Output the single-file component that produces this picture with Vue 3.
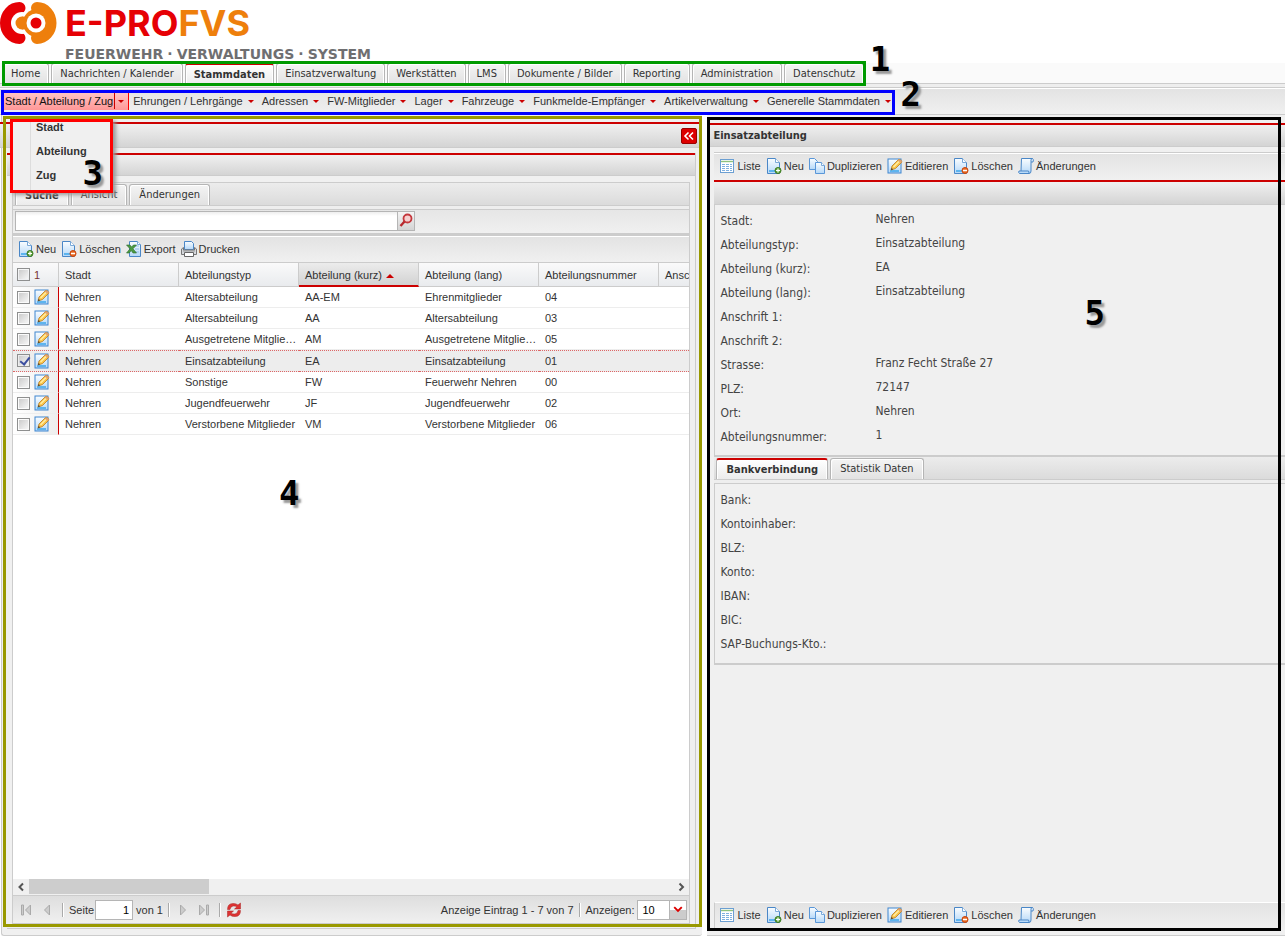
<script setup>
import { ref } from 'vue'

const tabs = ['Home', 'Nachrichten / Kalender', 'Stammdaten', 'Einsatzverwaltung', 'Werkstätten', 'LMS', 'Dokumente / Bilder', 'Reporting', 'Administration', 'Datenschutz']
const activeTab = ref('Stammdaten')
const menus = ['Stadt / Abteilung / Zug', 'Ehrungen / Lehrgänge', 'Adressen', 'FW-Mitglieder', 'Lager', 'Fahrzeuge', 'Funkmelde-Empfänger', 'Artikelverwaltung', 'Generelle Stammdaten']
const subMenu = ['Stadt', 'Abteilung', 'Zug']
const listTools = [['Neu', 'add'], ['Löschen', 'del'], ['Export', 'xls'], ['Drucken', 'print']]
const detailTools = [['Liste', 'list'], ['Neu', 'add'], ['Duplizieren', 'copy'], ['Editieren', 'edit'], ['Löschen', 'del'], ['Änderungen', 'log']]
const query = ref('')
const page = ref('1')
const rows = ref([
  { typ: 'Altersabteilung', kurz: 'AA-EM', lang: 'Ehrenmitglieder', nr: '04', on: false },
  { typ: 'Altersabteilung', kurz: 'AA', lang: 'Altersabteilung', nr: '03', on: false },
  { typ: 'Ausgetretene Mitglieder', kurz: 'AM', lang: 'Ausgetretene Mitglieder', nr: '05', on: false },
  { typ: 'Einsatzabteilung', kurz: 'EA', lang: 'Einsatzabteilung', nr: '01', on: true },
  { typ: 'Sonstige', kurz: 'FW', lang: 'Feuerwehr Nehren', nr: '00', on: false },
  { typ: 'Jugendfeuerwehr', kurz: 'JF', lang: 'Jugendfeuerwehr', nr: '02', on: false },
  { typ: 'Verstorbene Mitglieder', kurz: 'VM', lang: 'Verstorbene Mitglieder', nr: '06', on: false }
])
const fields = [['Stadt', 'Nehren'], ['Abteilungstyp', 'Einsatzabteilung'], ['Abteilung (kurz)', 'EA'], ['Abteilung (lang)', 'Einsatzabteilung'], ['Anschrift 1', ''], ['Anschrift 2', ''], ['Strasse', 'Franz Fecht Straße 27'], ['PLZ', '72147'], ['Ort', 'Nehren'], ['Abteilungsnummer', '1']]
const bank = ['Bank', 'Kontoinhaber', 'BLZ', 'Konto', 'IBAN', 'BIC', 'SAP-Buchungs-Kto.']
</script>

<template>
  <div class="app">
    <svg class="defs" aria-hidden="true">
      <defs>
        <linearGradient id="paper" x1="0" y1="0" x2="0" y2="1"><stop offset="0" stop-color="#fafdff" /><stop offset="1" stop-color="#b5d8f8" /></linearGradient>
      </defs>
      <symbol id="i-page" viewBox="0 0 16 16">
        <path d="M1.500 .5h8l4 4v11h-12z" fill="url(#paper)" stroke="#4a87c7" />
        <path d="M9.500 .5v4h4" fill="#fff" stroke="#7aa9d8" />
        <path d="M3 13h9" stroke="#5db4ee" stroke-width="2" />
      </symbol>
      <symbol id="i-add" viewBox="0 0 16 16">
        <use href="#i-page" />
        <circle cx="12" cy="12.500" r="3" fill="#5fa43a" stroke="#3b7a22" />
        <path d="M12 10.500v4M10 12.500h4" stroke="#fff" stroke-width="1.200" />
      </symbol>
      <symbol id="i-del" viewBox="0 0 16 16">
        <use href="#i-page" />
        <circle cx="12" cy="12.500" r="3" fill="#ea6a20" stroke="#c8440c" />
        <path d="M10 12.500h4" stroke="#fff" stroke-width="1.500" />
      </symbol>
      <symbol id="i-xls" viewBox="0 0 16 16">
        <path d="M3.500 .5h8l3 3v12h-11z" fill="url(#paper)" stroke="#4a87c7" />
        <path d="M11.500 .5v3h3" fill="#fff" stroke="#7aa9d8" />
        <path d="M9 5h4M9 8h4M9 11h4" stroke="#8fbde8" />
        <path d="M.5 4h3.500l1.500 2L7.500 4H10.500L7 7.800 10.500 12H7L5.200 9.500 3.200 12H.5L4 7.800z" fill="#4c9a42" stroke="#2b6b2c" stroke-width=".6" />
      </symbol>
      <symbol id="i-print" viewBox="0 0 16 16">
        <path d="M3.500 .5h7l2 2v6h-9z" fill="url(#paper)" stroke="#4a87c7" />
        <path d="M.5 8l2-1.500V9h11V6.500l2 1.500v5.500H.5z" fill="#d5d8dc" stroke="#777" />
        <path d="M3.500 11.500h9v4h-9z" fill="#fff" stroke="#666" />
        <path d="M2 10h12" stroke="#999" />
      </symbol>
      <symbol id="i-edit" viewBox="0 0 16 16">
        <rect x="1" y="1" width="13" height="14" fill="url(#paper)" stroke="#3f86d0" />
        <path d="M3 13h9" stroke="#5db4ee" stroke-width="2" />
        <path d="M4 12l1-4L11.500 1.500q2.500-.5 3.500 2.500L8.500 10.500z" fill="#fbc54a" stroke="#b57a22" stroke-width=".8" />
        <path d="M6.500 9L13 2.500" stroke="#fff0a8" stroke-width="1.200" />
        <path d="M11.500 1.500q3-.5 3.500 2.500l-1 1-3.500-2.500z" fill="#e0a070" />
        <path d="M4 12l.6-2 1.500 1.300z" fill="#333" />
      </symbol>
      <symbol id="i-list" viewBox="0 0 16 16">
        <rect x="1.500" y="1.500" width="13" height="13" fill="#fff" stroke="#6c9fd2" />
        <path d="M2 3.500h12" stroke="#8fc27f" stroke-width="1.400" />
        <path d="M3 6.500h10M3 8.500h10M3 10.500h10M3 12.500h10" stroke="#7fb0e0" />
        <path d="M6.500 5.500v8M10.500 5.500v8" stroke="#fff" />
      </symbol>
      <symbol id="i-copy" viewBox="0 0 16 16">
        <path d="M.5 .5h5l3 3v8h-8z" fill="url(#paper)" stroke="#5a97d8" />
        <path d="M6.500 4.500h6l3 3v8h-9z" fill="url(#paper)" stroke="#5a97d8" />
        <path d="M12.500 4.500v3h3" fill="#fff" stroke="#7aa9d8" />
      </symbol>
      <symbol id="i-log" viewBox="0 0 16 16">
        <path d="M3.500 .5h11q1.500 1 .5 3.500h-2v9q0 2.500-2 2.500H1.500q-1.500-1-.5-2.500h2z" fill="url(#paper)" stroke="#4a87c7" />
        <path d="M3 13h7.500q.5 1 .5 2.500M13 4V2q0-1.500 1.500-1.500" fill="none" stroke="#4a87c7" />
      </symbol>
    </svg>

    <header class="brand">
      <svg class="mark" viewBox="0 0 57 42" aria-hidden="true">
        <path d="M19.500 6A13.500 15 0 0 0 19.500 36" fill="none" stroke="#e60005" stroke-width="12" stroke-linecap="round" />
        <circle cx="22" cy="21" r="11" fill="#fff" />
        <path d="M37 6A13.500 15 0 0 1 37 36" fill="none" stroke="#ee7f0c" stroke-width="12" stroke-linecap="round" />
        <circle cx="37" cy="21" r="14" fill="#ee7f0c" />
        <circle cx="22" cy="21" r="6.500" fill="#ee7f0c" />
        <path d="M22 14.500q4 1 7-2v17q-3-3-7-2z" fill="#ee7f0c" />
        <circle cx="36" cy="21" r="9.500" fill="#fff" />
        <circle cx="36" cy="21" r="5.500" fill="#e60005" />
      </svg>
      <div class="words">
        <div class="name">E-PRO<span>FVS</span></div>
        <div class="claim">FEUERWEHR<span>·</span>VERWALTUNGS<span>·</span>SYSTEM</div>
      </div>
    </header>

    <nav class="tabbar">
      <div class="tabs main-tabs">
        <button v-for="t in tabs" :key="t" class="tab" :class="{ active: t === activeTab }" @click="activeTab = t">{{ t }}</button>
        <span class="frame green"></span>
        <span class="mark-no one">1</span>
      </div>
    </nav>

    <nav class="menubar">
      <div class="menus">
        <button v-for="(m, i) in menus" :key="m" class="menu" :class="{ open: i === 0 }"><span>{{ m }}</span><i></i></button>
        <span class="frame blue"></span>
        <span class="mark-no two">2</span>
        <div class="dropdown">
          <a v-for="s in subMenu" :key="s" href="#">{{ s }}</a>
          <span class="frame red"></span>
          <span class="mark-no three">3</span>
        </div>
      </div>
    </nav>

    <main class="work">
      <section class="left">
        <div class="bar top-bar">
          <button class="collapse" aria-label="Einklappen">
            <svg viewBox="0 0 14 14"><path d="M6.500 3.500L3 7l3.500 3.500M11 3.500L7.500 7l3.500 3.500" fill="none" stroke="#fff" stroke-width="1.600" /></svg>
          </button>
        </div>
        <div class="inner">
          <div class="bar sub-bar"></div>
          <div class="card">
            <div class="tabs strip list-strip">
              <button class="tab active">Suche</button>
              <button class="tab">Ansicht</button>
              <button class="tab">Änderungen</button>
            </div>
            <div class="search">
              <input v-model="query" type="text" aria-label="Suche">
              <button aria-label="Suchen">
                <svg viewBox="0 0 16 16"><circle cx="9.500" cy="5.500" r="4" fill="#f6cfcf" stroke="#c4373c" stroke-width="1.800" /><path d="M6.500 8.500l-4 4.500" stroke="#b8282d" stroke-width="2.400" /></svg>
              </button>
            </div>
            <div class="tools list-tools">
              <button v-for="[n, ic] in listTools" :key="n"><svg><use :href="'#i-' + ic" /></svg>{{ n }}</button>
            </div>
            <div class="grid">
              <table>
                <colgroup><col class="c0"><col><col><col><col><col><col></colgroup>
                <thead>
                  <tr>
                    <th class="pick"><div><input type="checkbox" aria-label="Alle auswählen"><span>1</span></div></th>
                    <th>Stadt</th><th>Abteilungstyp</th><th class="sorted">Abteilung (kurz)<i></i></th><th>Abteilung (lang)</th><th>Abteilungsnummer</th><th>Anschrift 1</th>
                  </tr>
                </thead>
                <tbody>
                  <tr v-for="r in rows" :key="r.nr" :class="{ selected: r.on }">
                    <td class="pick"><div><input v-model="r.on" type="checkbox" :aria-label="r.lang"><svg><use href="#i-edit" /></svg></div></td>
                    <td>Nehren</td><td>{{ r.typ }}</td><td>{{ r.kurz }}</td><td>{{ r.lang }}</td><td>{{ r.nr }}</td><td></td>
                  </tr>
                </tbody>
              </table>
              <span class="mark-no four">4</span>
            </div>
            <div class="hscroll">
              <svg viewBox="0 0 16 16"><path d="M10 4.500L6.500 8l3.500 3.500" /></svg>
              <div class="track"><div class="thumb"></div></div>
              <svg viewBox="0 0 16 16"><path d="M6.500 4.500L10 8l-3.500 3.500" /></svg>
            </div>
            <div class="paging">
              <button class="pg" aria-label="Erste Seite"><svg viewBox="0 0 16 16"><path d="M3.500 3h2v10h-2zM12.500 3v10l-5-5z" /></svg></button>
              <button class="pg" aria-label="Vorige Seite"><svg viewBox="0 0 16 16"><path d="M10.500 3v10l-5-5z" /></svg></button>
              <b class="sep"></b>
              <label for="page">Seite</label>
              <input id="page" v-model="page" type="text">
              <span>von 1</span>
              <b class="sep"></b>
              <button class="pg" aria-label="Nächste Seite"><svg viewBox="0 0 16 16"><path d="M5.500 3v10l5-5z" /></svg></button>
              <button class="pg" aria-label="Letzte Seite"><svg viewBox="0 0 16 16"><path d="M3.500 3v10l5-5zM10.500 3h2v10h-2z" /></svg></button>
              <b class="sep"></b>
              <button class="pg reload" aria-label="Aktualisieren"><svg viewBox="0 0 16 16"><path d="M1.500 7.500Q1.500 1.500 7 1.500q3-.2 5 1.500l2.500-2v6H8.500l2.500-2.200Q9.500 3.800 7 4 4.300 4.500 4 7.500z" /><path d="M14.500 8.500q0 6-5.500 6-3 .2-5-1.500l-2.500 2v-6h6L5 11.200q1.500 1 4 .8 2.700-.5 3-3.500z" /></svg></button>
              <span class="info">Anzeige Eintrag 1 - 7 von 7</span>
              <b class="sep"></b>
              <label for="size">Anzeigen:</label>
              <span class="combo">
                <select id="size"><option>10</option><option>25</option></select>
                <svg viewBox="0 0 17 18"><path d="M4.500 6L8.500 10l4-4" /></svg>
              </span>
            </div>
          </div>
        </div>
        <span class="frame olive"></span>
      </section>

      <section class="right">
        <h2 class="bar">Einsatzabteilung</h2>
        <div class="detail">
          <div class="tools">
            <button v-for="[n, ic] in detailTools" :key="n"><svg><use :href="'#i-' + ic" /></svg>{{ n }}</button>
          </div>
          <div class="bar form-bar"></div>
          <dl class="form">
            <div v-for="[k, v] in fields" :key="k"><dt>{{ k }}:</dt><dd>{{ v }}</dd></div>
          </dl>
          <div class="tabs strip">
            <button class="tab active">Bankverbindung</button>
            <button class="tab">Statistik Daten</button>
          </div>
          <dl class="form bank">
            <div v-for="k in bank" :key="k"><dt>{{ k }}:</dt><dd></dd></div>
          </dl>
          <div class="tools bottom">
            <button v-for="[n, ic] in detailTools" :key="n"><svg><use :href="'#i-' + ic" /></svg>{{ n }}</button>
          </div>
        </div>
        <span class="frame black"></span>
        <span class="mark-no five">5</span>
      </section>
    </main>
  </div>
</template>

<style>
html, body { margin: 0; background: #fff; overflow: hidden; }
</style>

<style scoped>
* { box-sizing: border-box; }
.app { height: 100vh; display: flex; flex-direction: column; font: 11px/14px "Liberation Sans", Arial, sans-serif; color: #333; }
.defs { position: absolute; width: 0; height: 0; }
button { border: 0; background: none; padding: 0; margin: 0; font: inherit; color: inherit; white-space: nowrap; }
a { color: inherit; text-decoration: none; }
svg { display: block; flex: none; }

.brand { display: flex; gap: 8px; height: 63px; padding-top: 2px; flex: none; }
.mark { width: 57px; height: 42px; }
.name { font: 700 36px/42px Inter, sans-serif; color: #e60005; }
.name span { color: #ee7f0c; }
.claim { margin-top: 2px; font: 700 14px/17px "DejaVu Sans", sans-serif; color: #6f6f71; }
.claim span { padding: 0 4px; }

.tabs { display: flex; font-family: "DejaVu Sans Condensed", "DejaVu Sans", sans-serif; }
.tab { height: 21px; padding: 0 9px; border: 1px solid #b5b5b5; border-bottom: 0; border-radius: 3px 3px 0 0; background: linear-gradient(#f4f4f4, #e2e2e2); box-shadow: inset 1px 1px #fff, inset -1px 0 #fff; }
.tab.active { background: linear-gradient(#fff, #ececec); font-weight: 700; border-top: 2px solid #c00; }
.tabbar { height: 25px; background: #fafafa; border-bottom: 1px solid #ccc; box-shadow: inset 0 -3px #eee, inset 0 -4px #ccc; flex: none; }
.main-tabs { position: relative; gap: 2px; width: max-content; padding: 0 2px; }
.main-tabs .tab { padding: 0 8px; }
.menubar { height: 27px; flex: none; background: linear-gradient(#e3e3e3, #f0f0f0); border-top: 1px solid #fff; border-bottom: 1px solid #ccc; }
.menus { position: relative; display: flex; width: max-content; padding: 3px 0 0 1px; }
.menu { display: flex; align-items: center; height: 18px; }
.menu span { padding: 0 5px 0 4px; }
.menu i { border: 3px solid transparent; border-top: 3px solid #c00; border-bottom: 0; margin-right: 4px; }
.menu.open { background: linear-gradient(#ffc6c6, #ff9797); border-right: 1px solid #f00; color: #111; }
.menu.open span { padding-right: 1px; height: 16px; line-height: 16px; border-right: 1px solid #c00; margin-right: 3px; }
.dropdown { position: absolute; z-index: 4; left: 10px; top: 30px; width: 103px; height: 74px; padding-left: 26px; background: linear-gradient(90deg, #f0f0f0 20px, #ddd 20px, #ddd 21px, #f0f0f0 21px); box-shadow: 3px 2px 4px #999; font-weight: 700; }
.dropdown a { display: block; height: 24px; line-height: 16px; }

.frame { position: absolute; pointer-events: none; z-index: 5; border: 3px solid; }
.green { inset: -2px 0 -2px 2px; border-color: #009a00; }
.blue { inset: 1px 0 -5px 1px; border-color: #00f; }
.red { inset: 0; border-color: #f00; }
.olive { inset: 1px 0 8px 1px; border-color: #990; }
.black { inset: 2px 4px 4px 0; border-color: #000; }
.mark-no { position: absolute; z-index: 6; font: 700 34px/34px "DejaVu Sans Mono", monospace; color: #000; text-shadow: 3px 3px 2px #999; }
.one { right: -24px; top: -21px; }
.two { right: -26px; top: -12px; }
.three { right: 10px; bottom: 3px; }
.four { left: 266px; top: 213px; }
.five { right: 180px; top: 181px; }

.work { flex: 1; min-height: 0; display: flex; gap: 5px; padding-bottom: 1px; }
.bar { border-top: 2px solid #c00; border-bottom: 1px solid #ccc; background: linear-gradient(#f0f0f0, #d4d4d4); margin: 0; }
.left { position: relative; flex: 701 1 0; min-width: 0; display: flex; flex-direction: column; margin-left: 1px; padding-top: 7px; background: #f0f0f0; border-left: 1px solid #ccc; border-bottom: 1px solid #ccc; border-radius: 0 0 3px 3px; }
.left .bar { flex: none; }
.top-bar { height: 26px; display: flex; justify-content: flex-end; align-items: center; padding-right: 5px; margin-left: -2px; }
.collapse { width: 16px; height: 16px; border: 1px solid #900; border-radius: 2px; background: #d00; }
.inner { flex: 1; min-height: 0; display: flex; flex-direction: column; margin: 5px 6px 6px 5px; border-bottom: 1px solid #ccc; border-right: 1px solid #ccc; }
.sub-bar { height: 23px; }
.card { flex: 1; min-height: 0; display: flex; flex-direction: column; margin: 6px 5px 4px 5px; border: 1px solid #ccc; }
.strip { gap: 2px; height: 27px; flex: none; padding: 1px 2px 0; background: linear-gradient(#ececec, #d8d8d8); border-bottom: 1px solid #ccc; box-shadow: inset 0 -3px #eee, inset 0 -4px #ccc; }
.search { display: flex; flex: none; height: 26px; padding: 1px 2px; border-bottom: 3px solid #ccc; background: linear-gradient(#e6e6e6, #f0f0f0); }
.search input { width: 383px; height: 20px; border: 1px solid #b5b5b5; background: linear-gradient(#eee, #fff 4px); padding: 0 4px; font: inherit; }
.search button { width: 17px; height: 20px; border: 1px solid #b5b5b5; border-left: 0; background: linear-gradient(#f4f4f4, #d4d4d4); }
.search svg { width: 16px; height: 16px; }
.tools { display: flex; align-items: center; gap: 5px; height: 27px; flex: none; padding: 0 0 2px 5px; border-top: 1px solid #fff; background: linear-gradient(#e3e3e3, #f0f0f0); }
.tools button { display: flex; align-items: center; gap: 2px; }
.tools svg { width: 16px; height: 16px; }
.list-tools { border-bottom: 1px solid #ccc; }
.grid { position: relative; flex: 1; min-height: 0; overflow: hidden; background: #fff; }
table { table-layout: fixed; border-collapse: separate; border-spacing: 0; width: 766px; }
.c0 { width: 46px; }
th, td { padding: 0 2px 0 6px; text-align: left; font-weight: 400; overflow: hidden; text-overflow: ellipsis; white-space: nowrap; }
th { height: 24px; background: linear-gradient(#fafafa, #e9ebee); border-bottom: 1px solid #ccc; border-right: 1px solid #ccc; }
td { height: 21px; border-bottom: 1px solid #ededed; }
th.sorted { background: linear-gradient(#ececec, #d2d2d2); border-bottom: 2px solid #c00; padding-top: 1px; }
.sorted i { display: inline-block; border: 4px solid transparent; border-top: 0; border-bottom: 4px solid #c00; margin: 0 0 1px 4px; }
th.pick, td.pick { padding: 0 0 0 4px; }
.pick div { display: flex; align-items: center; gap: 4px; height: 19px; }
td.pick { background: linear-gradient(90deg, #fff, #eee); border-right: 1px solid #c00; }
.pick svg { width: 16px; height: 16px; }
.pick input { appearance: none; width: 13px; height: 13px; margin: 0; border: 1px solid #8e8f8f; background: linear-gradient(135deg, #ccc, #f6f6f6) content-box #fff; padding: 1px; }
.pick input:checked::after { content: ""; display: block; width: 4px; height: 8px; margin: -1px 0 0 3px; border: solid #3c4fa0; border-width: 0 2px 2px 0; transform: rotate(38deg); }
.pick span { color: #733; }
.selected td { background: #ededed; border-top: 1px dotted #d66; border-bottom: 1px dotted #d66; padding-bottom: 1px; }
.hscroll { display: flex; height: 16px; flex: none; background: #f0f0f0; }
.hscroll svg { width: 16px; height: 16px; fill: none; stroke: #555; stroke-width: 2; }
.track { flex: 1; }
.thumb { width: 28%; height: 15px; background: #cdcdcd; }
.paging { display: flex; align-items: center; height: 28px; flex: none; padding: 0 2px 0 5px; border-top: 1px solid #ccc; background: linear-gradient(#dedede, #f0f0f0); }
.pg svg { width: 16px; height: 16px; fill: #ccc; stroke: #aaa; }
.pg { margin-right: 5px; }
.reload svg { fill: #d33; stroke: #a22; stroke-width: .5; }
.sep { width: 2px; height: 14px; border-left: 1px solid #aaa; border-right: 1px solid #fff; margin: 0 5px 0 2px; }
.paging input { width: 38px; height: 20px; margin: 0 3px 0 1px; text-align: right; border: 1px solid #b5b5b5; padding: 0 3px; font: inherit; }
.paging input + span { margin-right: 3px; }
.info { margin-left: auto; padding-right: 3px; }
.combo { position: relative; margin-left: 3px; display: flex; border: 1px solid #b5b5b5; height: 20px; background: #fff; }
.combo select { appearance: none; width: 48px; border: 0; padding: 0 4px; font: inherit; background: transparent; }
.combo svg { position: absolute; right: 0; top: 0; width: 17px; height: 18px; background: linear-gradient(#fff 50%, #ccc 50%); border-left: 1px solid #b5b5b5; fill: none; stroke: #d00; stroke-width: 2; pointer-events: none; }

.right { position: relative; flex: 578 1 0; min-width: 0; display: flex; flex-direction: column; padding: 8px 0 1px; background: #f0f0f0; border-bottom: 1px solid #ccc; }
.right h2 { height: 24px; padding-left: 6px; font: 700 11px/21px "DejaVu Sans Condensed", "DejaVu Sans", sans-serif; flex: none; }
.detail { flex: 1; min-height: 0; display: flex; flex-direction: column; margin: 5px 0 5px 7px; border-top: 1px solid #ccc; }
.form-bar { height: 25px; flex: none; }
.form { margin: 0; padding: 4px 5px 6px; font: 12px/24px "DejaVu Sans Condensed", "DejaVu Sans", sans-serif; color: #444; border-bottom: 2px solid #ccc; border-left: 1px solid #ccc; }
.form div { display: flex; height: 24px; }
dt { width: 155px; }
dd { margin: 0; line-height: 20px; }
.bank { padding-bottom: 7px; }
.bottom { margin-top: auto; border-left: 1px solid #ccc; padding-left: 4px; }
</style>
